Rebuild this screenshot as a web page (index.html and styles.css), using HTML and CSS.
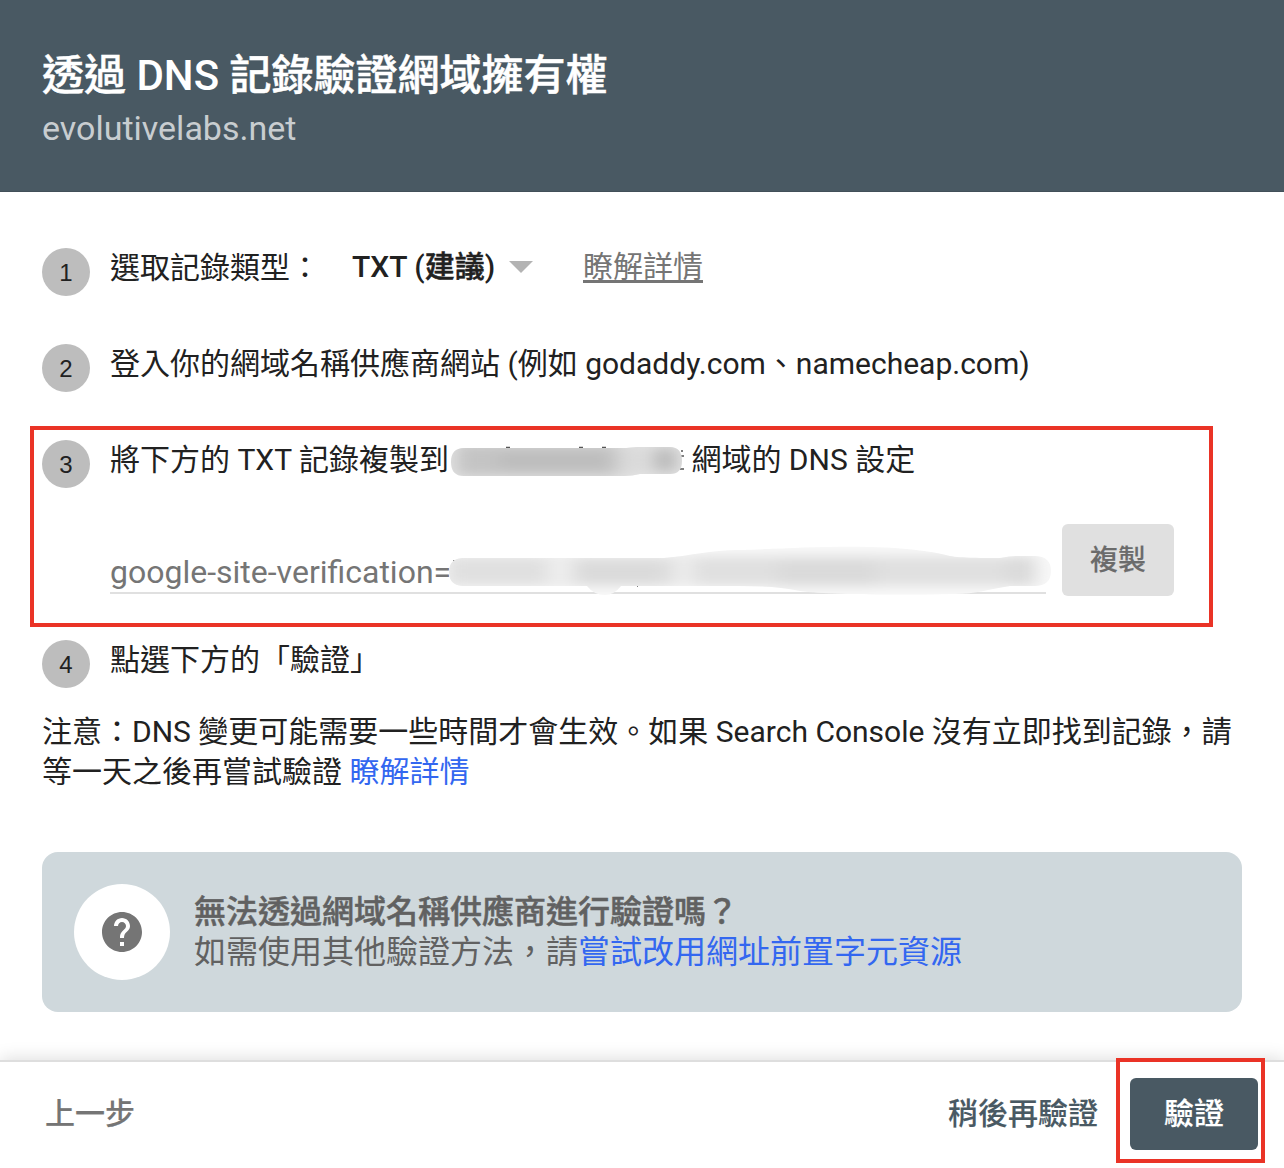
FILE: index.html
```html
<!DOCTYPE html>
<html lang="zh-Hant">
<head>
<meta charset="utf-8">
<title>透過 DNS 記錄驗證網域擁有權</title>
<link rel="stylesheet" href="styles.css">
</head>
<body>
<div class="dialog">
  <header class="header">
    <h1 class="title"><span class="strong">透過</span> DNS <span class="strong">記錄驗證網域擁有權</span></h1>
    <p class="domain">evolutivelabs.net</p>
  </header>
  <main class="content">
    <ol class="steps">
      <li class="step">
        <span class="number">1</span>
        <div class="text record">
          <span class="label">選取記錄類型：</span>
          <span class="select"><span>TXT (<span class="strong">建議</span>)</span><i class="arrow"></i></span>
          <a class="more">瞭解詳情</a>
        </div>
      </li>
      <li class="step">
        <span class="number">2</span>
        <div class="text">登入你的網域名稱供應商網站 (例如 godaddy.com、namecheap.com)</div>
      </li>
      <li class="step step-copy">
        <span class="number">3</span>
        <div class="body">
          <div class="text redacted-line"><span>將下方的 TXT 記錄複製到</span><span class="gap"></span><span>網域的 DNS 設定</span></div>
          <div class="copy-row">
            <div class="field">google-site-verification=</div>
            <button class="btn btn-copy">複製</button>
          </div>
        </div>
        <svg class="smudges" width="610" height="154" viewBox="446 444 610 154">
          <defs>
            <filter id="soft" x="-20%" y="-100%" width="140%" height="300%"><feGaussianBlur stdDeviation="9 6"/></filter>
            <clipPath id="name"><path d="M464 448H626L637 447H670Q682 447 682 461Q682 474 670 474H640Q632 476 625 476H464Q451 476 451 462Q451 448 464 448Z"/></clipPath>
            <clipPath id="token"><path d="M462 558H664C690 556 710 550 740 550C780 549 820 546 870 547C910 548 935 552 950 556C960 558 985 558 1000 558Q1010 556 1016 556H1036Q1051 557 1051 571Q1051 585 1036 586H1010C990 589 975 594 955 594C900 595 830 595 800 591C780 587 760 586 740 586H621Q614 595 605 595Q594 595 587 586H462Q449 585 449 572Q449 559 462 558Z"/></clipPath>
          </defs>
          <path d="M506 447.5h4M579 447.5h4M602 447.5h4M681 451h2M681 456h3M680 469h4M453 561h2M637 586h1" stroke="#555" stroke-width="1.4"/>
          <g clip-path="url(#name)">
            <path fill="#e4e4e4" d="M446 444h240v34H446z"/>
            <g filter="url(#soft)">
              <path fill="#c4c4c4" d="M456 444h162v32H456z"/>
              <path fill="#bcbcbc" d="M500 454h108v14H500z"/>
              <path fill="#dadada" d="M618 446h30v28h-30z"/>
              <path fill="#b8b8b8" d="M654 448h22v24h-22z"/>
            </g>
          </g>
          <g clip-path="url(#token)">
            <path fill="#f8f8f8" d="M446 544h610v54H446z"/>
            <g filter="url(#soft)">
              <path fill="#e0e0e0" d="M446 556h590v30H446z"/>
              <path fill="#dadada" d="M578 562h84v22h-84zM778 560h98v26h-98zM1006 558h30v26h-30z"/>
              <path fill="#eee" d="M548 552h24v32h-24zM676 552h16v34h-16z"/>
            </g>
          </g>
        </svg>
        <div class="mark mark-copy"></div>
      </li>
      <li class="step">
        <span class="number">4</span>
        <div class="text">點選下方的「驗證」</div>
      </li>
    </ol>
    <p class="note">注意：DNS 變更可能需要一些時間才會生效。如果 Search Console 沒有立即找到記錄，請等一天之後再嘗試驗證 <a class="link">瞭解詳情</a></p>
    <section class="help">
      <span class="help-icon">
        <svg width="48" height="48" viewBox="0 0 24 24"><path fill="#757575" d="M12 2C6.48 2 2 6.48 2 12s4.48 10 10 10 10-4.48 10-10S17.52 2 12 2zm1 17h-2v-2h2v2zm2.07-7.75-.9.92C13.45 12.9 13 13.5 13 15h-2v-.5c0-1.1.45-2.1 1.17-2.83l1.24-1.26c.37-.36.59-.86.59-1.41 0-1.1-.9-2-2-2s-2 .9-2 2H8c0-2.21 1.79-4 4-4s4 1.79 4 4c0 .88-.36 1.68-.93 2.25z"/></svg>
      </span>
      <div>
        <h2 class="help-title strong">無法透過網域名稱供應商進行驗證嗎？</h2>
        <p class="help-text">如需使用其他驗證方法，請<a class="link">嘗試改用網址前置字元資源</a></p>
      </div>
    </section>
  </main>
  <footer class="footer">
    <button class="btn btn-back">上一步</button>
    <button class="btn btn-later">稍後再驗證</button>
    <div class="verify">
      <button class="btn btn-verify">驗證</button>
      <div class="mark mark-verify"></div>
    </div>
  </footer>
</div>
</body>
</html>
```

FILE: styles.css
```css
* { box-sizing: border-box; margin: 0; padding: 0; }

body {
  font-family: Roboto, "Noto Sans CJK TC", sans-serif;
  font-size: 30px;
  line-height: 40px;
  color: #212121;
  background: #fff;
}

.dialog { display: flex; flex-direction: column; width: 1284px; height: 1168px; overflow: hidden; }

/* medium weight for the Chinese glyphs */
.strong { -webkit-text-stroke: 0.5px currentColor; }

.header { height: 192px; padding: 48px 42px 0; background: #495963; border-bottom: 1px solid #425059; }
.title { font-size: 42px; line-height: 56px; font-weight: 500; color: #fff; white-space: nowrap; }
.domain { font-size: 34px; line-height: 48px; color: #c8cdd0; }

.content { flex: 1; padding: 56px 42px 0; }

.steps { list-style: none; }
.step { position: relative; display: flex; gap: 20px; height: 96px; }
.step:last-child { height: 72px; }
.step-copy { height: 200px; }
.number {
  flex: none; width: 48px; height: 48px; border-radius: 50%;
  background: #bdbdbd; text-align: center;
  font: 24px/50px "Liberation Sans", sans-serif;
}
.text { white-space: nowrap; }
.record { display: flex; }
.label { width: 242px; }
.select { display: flex; align-items: center; gap: 14px; width: 231px; height: 38px; font-weight: 500; }
.arrow { border: 12px solid transparent; border-top-color: #b3b3b3; border-bottom: 0; }
.more { height: 38px; line-height: 38px; color: #757575; text-decoration: underline; text-decoration-thickness: 3px; text-underline-offset: 3px; }

.body { flex: 1; }
.redacted-line { display: flex; }
.gap { width: 242.5px; }
.copy-row { display: flex; gap: 16px; margin-top: 44px; }
.field { width: 936px; height: 70px; padding-top: 28px; border-bottom: 2px solid #e0e0e0; font-size: 32px; color: #757575; }
.smudges { position: absolute; left: 404px; top: 4px; }

.mark { position: absolute; border: 4px solid #ea3326; pointer-events: none; }
.mark-copy { left: -12px; top: -14px; width: 1183px; height: 201px; }

.note { width: 1200px; margin-bottom: 60px; }
.link { color: #3367f0; }

.help { display: flex; align-items: center; gap: 24px; height: 160px; padding: 0 32px; border-radius: 16px; background: #cfd8dc; color: #616161; font-size: 32px; }
.help-icon { display: flex; align-items: center; justify-content: center; width: 96px; height: 96px; border-radius: 50%; background: #fff; }
.help-title { font-size: 32px; font-weight: 500; }

.footer { position: relative; display: flex; align-items: center; height: 108px; padding: 0 26px 0 45px; border-top: 2px solid #dedede; background: #fff; box-shadow: 0 -2px 16px rgba(0, 0, 0, 0.13); }
.btn { border: 0; font: 500 30px/40px Roboto, "Noto Sans CJK TC", sans-serif; background: none; -webkit-text-stroke: 0.15px currentColor; }
.btn-back { margin-right: auto; padding-bottom: 2px; color: #757575; }
.btn-later { margin-right: 32px; padding-bottom: 2px; color: #495963; }
.verify { position: relative; margin-top: -2px; }
.btn-verify { display: block; width: 128px; height: 72px; border-radius: 6px; background: #495963; color: #fff; }
.btn-copy { width: 112px; height: 72px; padding-top: 2px; border-radius: 6px; background: #e0e0e0; color: #6b6b6b; font-size: 28px; }
.mark-verify { left: -14px; top: -20px; width: 149px; height: 105px; }
```
